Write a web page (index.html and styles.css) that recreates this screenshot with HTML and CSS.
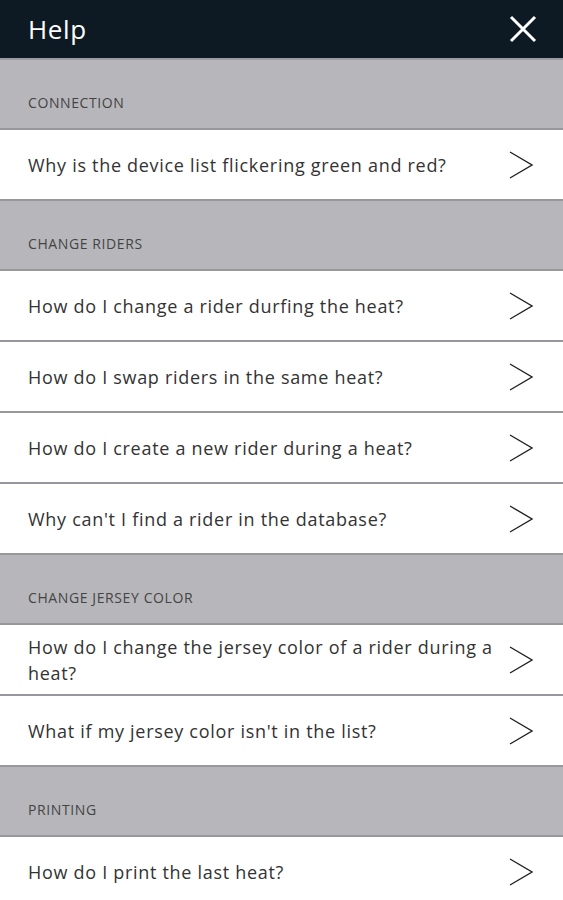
FILE: index.html
```html
<!DOCTYPE html>
<html lang="en">
<head>
  <meta charset="UTF-8">
  <meta name="viewport" content="width=device-width, initial-scale=1.0">
  <title>Help</title>
  <link rel="stylesheet" href="styles.css">
</head>
<body>
  <header class="topbar">
    <span class="topbar-title">Help</span>
    <button class="close-button" aria-label="Close">
      <svg width="28" height="28" viewBox="0 0 28 28"><path d="M2 2 L26 26 M26 2 L2 26" stroke="#fff" stroke-width="3" fill="none"/></svg>
    </button>
  </header>

  <div class="help-list">
    <div class="section-title">CONNECTION</div>
    <a class="help-item">
      <span>Why is the device list flickering green and red?</span>
      <svg class="chevron" width="24" height="28" viewBox="0 0 24 28"><path d="M1 1 L23 14 L1 27" stroke="#222" stroke-width="1.4" fill="none"/></svg>
    </a>

    <div class="section-title">CHANGE RIDERS</div>
    <a class="help-item">
      <span>How do I change a rider durfing the heat?</span>
      <svg class="chevron" width="24" height="28" viewBox="0 0 24 28"><path d="M1 1 L23 14 L1 27" stroke="#222" stroke-width="1.4" fill="none"/></svg>
    </a>
    <a class="help-item">
      <span>How do I swap riders in the same heat?</span>
      <svg class="chevron" width="24" height="28" viewBox="0 0 24 28"><path d="M1 1 L23 14 L1 27" stroke="#222" stroke-width="1.4" fill="none"/></svg>
    </a>
    <a class="help-item">
      <span>How do I create a new rider during a heat?</span>
      <svg class="chevron" width="24" height="28" viewBox="0 0 24 28"><path d="M1 1 L23 14 L1 27" stroke="#222" stroke-width="1.4" fill="none"/></svg>
    </a>
    <a class="help-item">
      <span>Why can't I find a rider in the database?</span>
      <svg class="chevron" width="24" height="28" viewBox="0 0 24 28"><path d="M1 1 L23 14 L1 27" stroke="#222" stroke-width="1.4" fill="none"/></svg>
    </a>

    <div class="section-title">CHANGE JERSEY COLOR</div>
    <a class="help-item">
      <span>How do I change the jersey color of a rider during a heat?</span>
      <svg class="chevron" width="24" height="28" viewBox="0 0 24 28"><path d="M1 1 L23 14 L1 27" stroke="#222" stroke-width="1.4" fill="none"/></svg>
    </a>
    <a class="help-item">
      <span>What if my jersey color isn't in the list?</span>
      <svg class="chevron" width="24" height="28" viewBox="0 0 24 28"><path d="M1 1 L23 14 L1 27" stroke="#222" stroke-width="1.4" fill="none"/></svg>
    </a>

    <div class="section-title">PRINTING</div>
    <a class="help-item">
      <span>How do I print the last heat?</span>
      <svg class="chevron" width="24" height="28" viewBox="0 0 24 28"><path d="M1 1 L23 14 L1 27" stroke="#222" stroke-width="1.4" fill="none"/></svg>
    </a>
  </div>
</body>
</html>
```

FILE: styles.css
```css
body {
  font-family: "Open Sans", "Liberation Sans", sans-serif;
  margin: 0;
  padding: 0;
  background-color: #b7b7bb;
  color: #333;
}
.topbar {
  background-color: #0e1a23;
  height: 58px;
  display: flex;
  align-items: center;
  justify-content: space-between;
  padding: 0 26px 0 28px;
  border-bottom: 2px solid #9c9ca0;
}
.topbar-title {
  color: #fff;
  font-size: 26px;
  letter-spacing: 0.6px;
}
.close-button {
  background: none;
  border: none;
  padding: 0;
  display: flex;
}
.help-list {
  display: flex;
  flex-direction: column;
}
.section-title {
  height: 70px;
  box-sizing: border-box;
  display: flex;
  align-items: flex-end;
  padding: 0 28px 16px;
  font-size: 14px;
  color: #444;
  letter-spacing: 0.6px;
  border-bottom: 2px solid #98989c;
}
.help-item {
  height: 71px;
  box-sizing: border-box;
  display: flex;
  align-items: center;
  justify-content: space-between;
  gap: 16px;
  padding: 0 30px 0 28px;
  background-color: #fff;
  border-bottom: 2px solid #98989c;
  font-size: 18px;
  line-height: 26px;
  letter-spacing: 0.7px;
  color: #333;
}
.chevron {
  flex-shrink: 0;
}
```
